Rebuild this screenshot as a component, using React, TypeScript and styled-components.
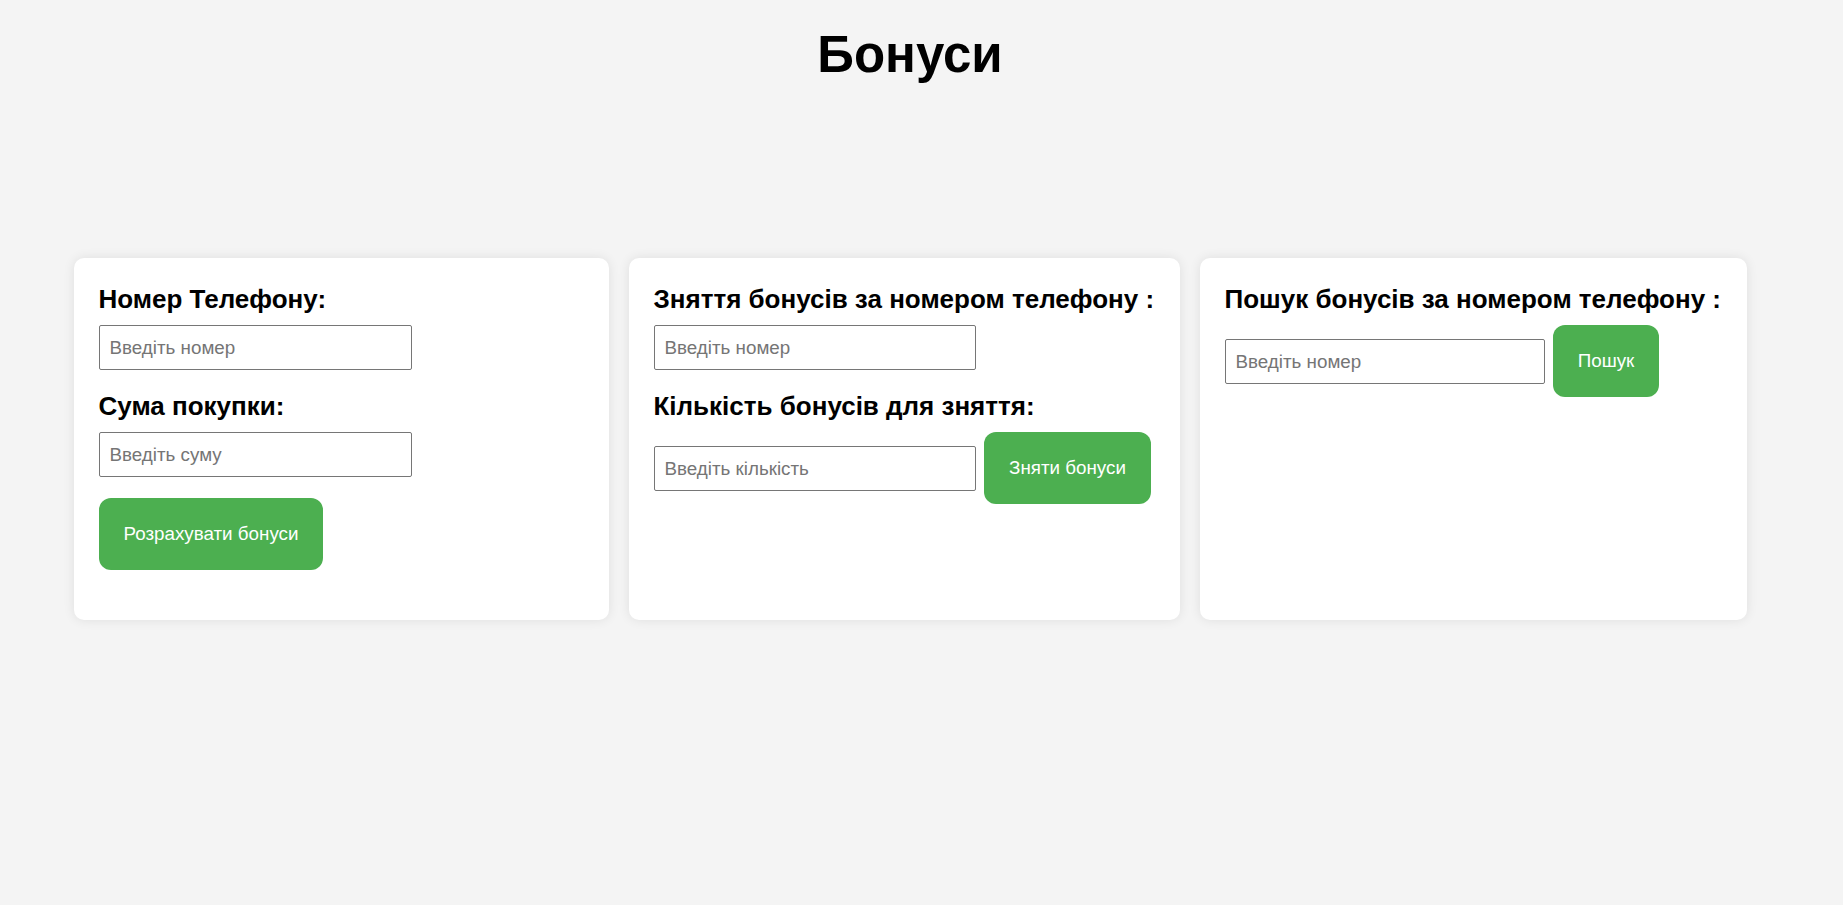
import React, { useState } from 'react';
import styled, { createGlobalStyle } from 'styled-components';

const GlobalStyle = createGlobalStyle`
  html, body {
    margin: 0;
    padding: 0;
    background-color: #f4f4f4;
    font-family: 'Liberation Sans', Arial, sans-serif;
    color: #000;
  }
  * {
    box-sizing: content-box;
  }
`;

const Page = styled.div`
  padding-right: 23px;
  min-height: 905px;
`;

const Title = styled.h1`
  margin: 26px 0 0;
  text-align: center;
  font-size: 51px;
  line-height: 57px;
  font-weight: 700;
`;

const CardRow = styled.div`
  display: grid;
  grid-template-columns: 535px 551px 547px;
  gap: 20px;
  justify-content: center;
  margin-top: 175px;
`;

const Card = styled.div`
  background-color: #fff;
  border-radius: 10px;
  box-shadow: 0 0 12px rgba(0, 0, 0, 0.09);
  padding: 26px 25px 25px;
  min-height: 311px;
`;

const Label = styled.h2`
  margin: 0 0 11px;
  font-size: 26px;
  line-height: 30px;
  font-weight: 700;
  white-space: nowrap;
`;

const Input = styled.input<{ $spaced?: boolean }>`
  display: block;
  width: 60%;
  padding: 11px 10px;
  margin: 0 0 ${(p) => (p.$spaced ? '21px' : '0')};
  border: 1px solid #767676;
  border-radius: 2px;
  font-family: 'Liberation Sans', Arial, sans-serif;
  font-size: 18.8px;
  line-height: 21px;
  color: #000;
  background: #fff;
  &::placeholder {
    color: #757575;
  }
  &:focus {
    outline: none;
  }
`;

const Row = styled.div`
  display: flex;
  align-items: center;
  gap: 8px;
`;

const Button = styled.button<{ $top?: number }>`
  margin-top: ${(p) => p.$top ?? 0}px;
  padding: 25px 25px;
  background-color: #4caf50;
  color: #fff;
  border: none;
  border-radius: 12px;
  font-family: 'Liberation Sans', Arial, sans-serif;
  font-size: 18.8px;
  line-height: 22px;
  cursor: pointer;
  white-space: nowrap;
  &:hover {
    opacity: 0.9;
  }
`;

export default function App() {
  const [phone, setPhone] = useState('');
  const [sum, setSum] = useState('');
  const [withdrawPhone, setWithdrawPhone] = useState('');
  const [amount, setAmount] = useState('');
  const [searchPhone, setSearchPhone] = useState('');

  return (
    <Page>
      <GlobalStyle />
      <Title>Бонуси</Title>
      <CardRow>
        <Card>
          <Label>Номер Телефону:</Label>
          <Input $spaced value={phone} onChange={(e) => setPhone(e.target.value)} placeholder='Введіть номер' />
          <Label>Сума покупки:</Label>
          <Input value={sum} onChange={(e) => setSum(e.target.value)} placeholder='Введіть суму' />
          <Button $top={21}>Розрахувати бонуси</Button>
        </Card>
        <Card>
          <Label>Зняття бонусів за номером телефону :</Label>
          <Input $spaced value={withdrawPhone} onChange={(e) => setWithdrawPhone(e.target.value)} placeholder='Введіть номер' />
          <Label>Кількість бонусів для зняття:</Label>
          <Row>
            <Input value={amount} onChange={(e) => setAmount(e.target.value)} placeholder='Введіть кількість' />
            <Button>Зняти бонуси</Button>
          </Row>
        </Card>
        <Card>
          <Label>Пошук бонусів за номером телефону :</Label>
          <Row>
            <Input value={searchPhone} onChange={(e) => setSearchPhone(e.target.value)} placeholder='Введіть номер' />
            <Button>Пошук</Button>
          </Row>
        </Card>
      </CardRow>
    </Page>
  );
}
